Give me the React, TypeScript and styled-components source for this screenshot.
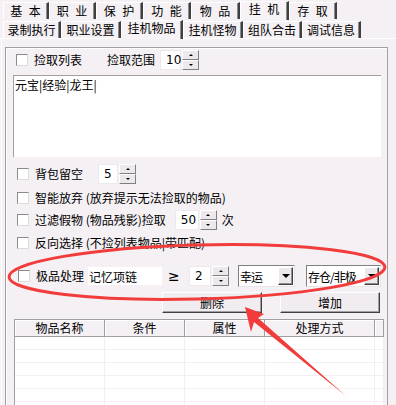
import * as React from "react";
import styled, { createGlobalStyle } from "styled-components";

const GlobalStyle = createGlobalStyle`
    html, body {
        margin: 0;
        padding: 0;
        background: #f4f0f4;
    }
    body {
        font-family: "Noto Sans CJK SC", "DejaVu Sans", sans-serif;
        font-size: 12px;
        color: #000;
    }
`;

const Window = styled.div`
    position: relative;
    width: 396px;
    height: 405px;
    overflow: hidden;
    background: #f4f0f4;
`;

const TabRow = styled.div<{ $top?: boolean }>`
    display: flex;
    height: 19px;
    padding-left: 3px;
    align-items: flex-end;
    border-bottom: ${p => (p.$top ? "none" : "1px solid #ffffff")};
`;

const Tab = styled.div<{ $w: number; $active?: boolean }>`
    box-sizing: border-box;
    width: ${p => p.$w}px;
    height: ${p => (p.$active ? 19 : 17)}px;
    margin-bottom: ${p => (p.$active ? -1 : 0)}px;
    display: flex;
    align-items: center;
    justify-content: center;
    line-height: 12px;
    padding-bottom: ${p => (p.$active ? 4 : 0)}px;
    border-left: 1px solid #ffffff;
    border-top: 1px solid #ffffff;
    border-right: 2px solid #404040;
    box-shadow: inset -1px 0 0 #8c8c8c;
    background: ${p => (p.$active ? "#f6f2f6" : "#f4f0f4")};
    word-spacing: 4px;
    white-space: pre;
    position: relative;
    z-index: ${p => (p.$active ? 1 : 0)};
`;

const Page = styled.div`
    height: 367px;
    border-left: 1px solid #ffffff;
    margin-left: 1px;
    padding: 8px 0 0 3px;
    box-sizing: border-box;
`;

const GroupBox = styled.div`
    width: 383px;
    height: 400px;
    box-sizing: border-box;
    border: 1px solid #a0a0a0;
    box-shadow: inset 1px 1px 0 #ffffff;
    padding: 2px 0 0 7px;
    display: flex;
    flex-direction: column;
`;

const Row = styled.div<{ $h?: number; $mt?: number; $pl?: number }>`
    display: flex;
    align-items: center;
    height: ${p => p.$h ?? 20}px;
    margin-top: ${p => p.$mt ?? 0}px;
    padding-left: ${p => p.$pl ?? 3}px;
    white-space: nowrap;
`;

const Check = styled.span`
    box-sizing: border-box;
    width: 12px;
    height: 12px;
    flex: none;
    background: #ffffff;
    border-top: 1px solid #8a8a8a;
    border-left: 1px solid #8a8a8a;
    border-right: 1px solid #dcdcdc;
    border-bottom: 1px solid #dcdcdc;
    margin-right: 6px;
`;

const Label = styled.span<{ $ml?: number; $mr?: number }>`
    margin-left: ${p => p.$ml ?? 0}px;
    margin-right: ${p => p.$mr ?? 0}px;
    line-height: 14px;
`;

const Memo = styled.div`
    box-sizing: border-box;
    width: 368px;
    height: 82px;
    margin-top: 5px;
    background: #ffffff;
    border-top: 1px solid #a0a0a0;
    border-left: 1px solid #a0a0a0;
    padding: 2px 1px;
    line-height: 14px;
`;

const SpinWrap = styled.div<{ $ml?: number }>`
    display: flex;
    height: 20px;
    margin-left: ${p => p.$ml ?? 0}px;
    flex: none;
`;

const SpinText = styled.div<{ $w: number }>`
    box-sizing: border-box;
    width: ${p => p.$w}px;
    height: 20px;
    background: #ffffff;
    border: 1px solid #ece8ec;
    display: flex;
    align-items: center;
    padding-left: 5px;
    font-family: "DejaVu Sans", sans-serif;
    font-size: 12px;
`;

const SpinButtons = styled.div`
    display: flex;
    flex-direction: column;
    width: 17px;
    height: 20px;
    margin-left: 1px;
`;

const SpinBtn = styled.div`
    box-sizing: border-box;
    flex: 1;
    background: #ece8ec;
    border-top: 1px solid #ffffff;
    border-left: 1px solid #ffffff;
    border-right: 1px solid #808080;
    border-bottom: 1px solid #808080;
    display: flex;
    align-items: center;
    justify-content: center;
`;

const Tri = styled.span<{ $down?: boolean; $size?: number }>`
    width: 0;
    height: 0;
    border-left: ${p => p.$size ?? 2}px solid transparent;
    border-right: ${p => p.$size ?? 2}px solid transparent;
    ${p =>
        p.$down
            ? `border-top: ${p.$size ?? 2}px solid #000;`
            : `border-bottom: ${p.$size ?? 2}px solid #000;`}
`;

const TextBox = styled.div<{ $w: number; $ml?: number }>`
    box-sizing: border-box;
    width: ${p => p.$w}px;
    height: 18px;
    margin-left: ${p => p.$ml ?? 0}px;
    background: #ffffff;
    padding-left: 1px;
    display: flex;
    align-items: center;
`;

const Combo = styled.div<{ $w: number; $ml?: number }>`
    box-sizing: border-box;
    width: ${p => p.$w}px;
    height: 22px;
    margin-left: ${p => p.$ml ?? 0}px;
    background: #ffffff;
    border-top: 1px solid #808080;
    border-left: 1px solid #808080;
    border-right: 1px solid #e8e4e8;
    border-bottom: 1px solid #e8e4e8;
    display: flex;
    align-items: center;
    padding: 0 1px;
`;

const ComboText = styled.span`
    flex: 1;
    min-width: 0;
    white-space: nowrap;
    letter-spacing: -1px;
`;

const ComboArrow = styled.div`
    box-sizing: border-box;
    flex: none;
    width: 15px;
    height: 18px;
    background: #ece8ec;
    border-top: 1px solid #ffffff;
    border-left: 1px solid #ffffff;
    border-right: 1px solid #404040;
    border-bottom: 1px solid #404040;
    box-shadow: inset -1px -1px 0 #909090;
    display: flex;
    align-items: center;
    justify-content: center;
`;

const Gte = styled.span`
    margin-left: 6px;
    width: 21px;
    font-family: "DejaVu Sans", sans-serif;
    font-size: 14px;
`;

const Button = styled.div<{ $ml: number }>`
    box-sizing: border-box;
    width: 100px;
    height: 21px;
    margin-left: ${p => p.$ml}px;
    background: #f0ecf0;
    border-top: 1px solid #ffffff;
    border-left: 1px solid #ffffff;
    border-right: 1px solid #404040;
    border-bottom: 1px solid #404040;
    box-shadow: inset -1px -1px 0 #a0a0a0;
    display: flex;
    align-items: center;
    justify-content: center;
`;

const Table = styled.div`
    box-sizing: border-box;
    width: 370px;
    margin-top: 6px;
    margin-left: 1px;
    border-left: 1px solid #a0a0a0;
    border-top: 1px solid #a0a0a0;
    background: #ffffff;
`;

const Grid = styled.div`
    display: grid;
    grid-template-columns: 90px 80px 80px 110px 9px;
`;

const HeadCell = styled.div`
    box-sizing: border-box;
    height: 17px;
    background: #f4f0f4;
    border-right: 1px solid #a0a0a0;
    border-bottom: 1px solid #a0a0a0;
    box-shadow: inset 1px 1px 0 #ffffff;
    display: flex;
    align-items: center;
    justify-content: center;
    line-height: 12px;
`;

const Cell = styled.div`
    box-sizing: border-box;
    height: 13px;
    border-right: 1px solid #f2eef2;
    border-bottom: 1px solid #f2eef2;
`;

const Overlay = styled.svg`
    position: absolute;
    left: 0;
    top: 0;
    pointer-events: none;
`;

const Spin: React.FC<{ value: string; w: number; ml?: number }> = ({ value, w, ml }) => (
    <SpinWrap $ml={ml}>
        <SpinText $w={w}>{value}</SpinText>
        <SpinButtons>
            <SpinBtn><Tri /></SpinBtn>
            <SpinBtn><Tri $down /></SpinBtn>
        </SpinButtons>
    </SpinWrap>
);

const topTabs: [string, number][] = [
    ["基 本", 46], ["职 业", 47], ["保 护", 47], ["功 能", 48],
    ["物 品", 49], ["挂 机", 49], ["存 取", 48]
];
const subTabs: [string, number][] = [
    ["录制执行", 58], ["职业设置", 60], ["挂机物品", 62],
    ["挂机怪物", 60], ["组队合击", 59], ["调试信息", 59]
];
const columns = ["物品名称", "条件", "属性", "处理方式", ""];

export default function App() {
    return <>
        <GlobalStyle />
        <Window>
            <TabRow $top>
                {topTabs.map(([t, w]) =>
                    <Tab key={t} $w={w} $active={t === "挂 机"}>{t}</Tab>
                )}
            </TabRow>
            <TabRow>
                {subTabs.map(([t, w]) =>
                    <Tab key={t} $w={w} $active={t === "挂机物品"}>{t}</Tab>
                )}
            </TabRow>
            <Page>
                <GroupBox>
                    <Row $pl={3}>
                        <Check />
                        <Label>捡取列表</Label>
                        <Label $ml={25} $mr={5}>捡取范围</Label>
                        <Spin value="10" w={21} />
                    </Row>
                    <Memo>元宝|经验|龙王|</Memo>
                    <Row $mt={7} $pl={4}>
                        <Check />
                        <Label>背包留空</Label>
                        <Spin value="5" w={20} ml={15} />
                    </Row>
                    <Row $mt={4} $pl={4}>
                        <Check />
                        <Label>智能放弃 (放弃提示无法捡取的物品)</Label>
                    </Row>
                    <Row $mt={2} $pl={4}>
                        <Check />
                        <Label>过滤假物 (物品残影)捡取</Label>
                        <Spin value="50" w={24} ml={9} />
                        <Label $ml={5}>次</Label>
                    </Row>
                    <Row $mt={3} $pl={4}>
                        <Check />
                        <Label>反向选择 (不捡列表物品|带匹配)</Label>
                    </Row>
                    <Row $h={24} $mt={11} $pl={5}>
                        <Check />
                        <Label>极品处理</Label>
                        <TextBox $w={74} $ml={4}>记忆项链</TextBox>
                        <Gte>≥</Gte>
                        <Spin value="2" w={22} />
                        <Combo $w={57} $ml={9}>
                            <ComboText>幸运</ComboText>
                            <ComboArrow><Tri $down $size={4} /></ComboArrow>
                        </Combo>
                        <Combo $w={75} $ml={11}>
                            <ComboText>存仓/非极</ComboText>
                            <ComboArrow><Tri $down $size={4} /></ComboArrow>
                        </Combo>
                    </Row>
                    <Row $h={21} $mt={4} $pl={0}>
                        <Button $ml={149}>删除</Button>
                        <Button $ml={18}>增加</Button>
                    </Row>
                    <Table>
                        <Grid>
                            {columns.map((c, i) => <HeadCell key={i}>{c}</HeadCell>)}
                            {Array.from({ length: 30 }, (_, i) => <Cell key={i} />)}
                        </Grid>
                    </Table>
                </GroupBox>
            </Page>
            <Overlay width={396} height={405} viewBox="0 0 396 405">
                <ellipse
                    cx={197}
                    cy={272}
                    rx={188}
                    ry={27}
                    transform="rotate(-1.5 197 272)"
                    fill="none"
                    stroke="#f23b3b"
                    strokeWidth={3}
                />
                <polygon
                    points="245,307 264,314 258,318 346,396 254,322 251,332"
                    fill="#f23b3b"
                />
            </Overlay>
        </Window>
    </>;
}
